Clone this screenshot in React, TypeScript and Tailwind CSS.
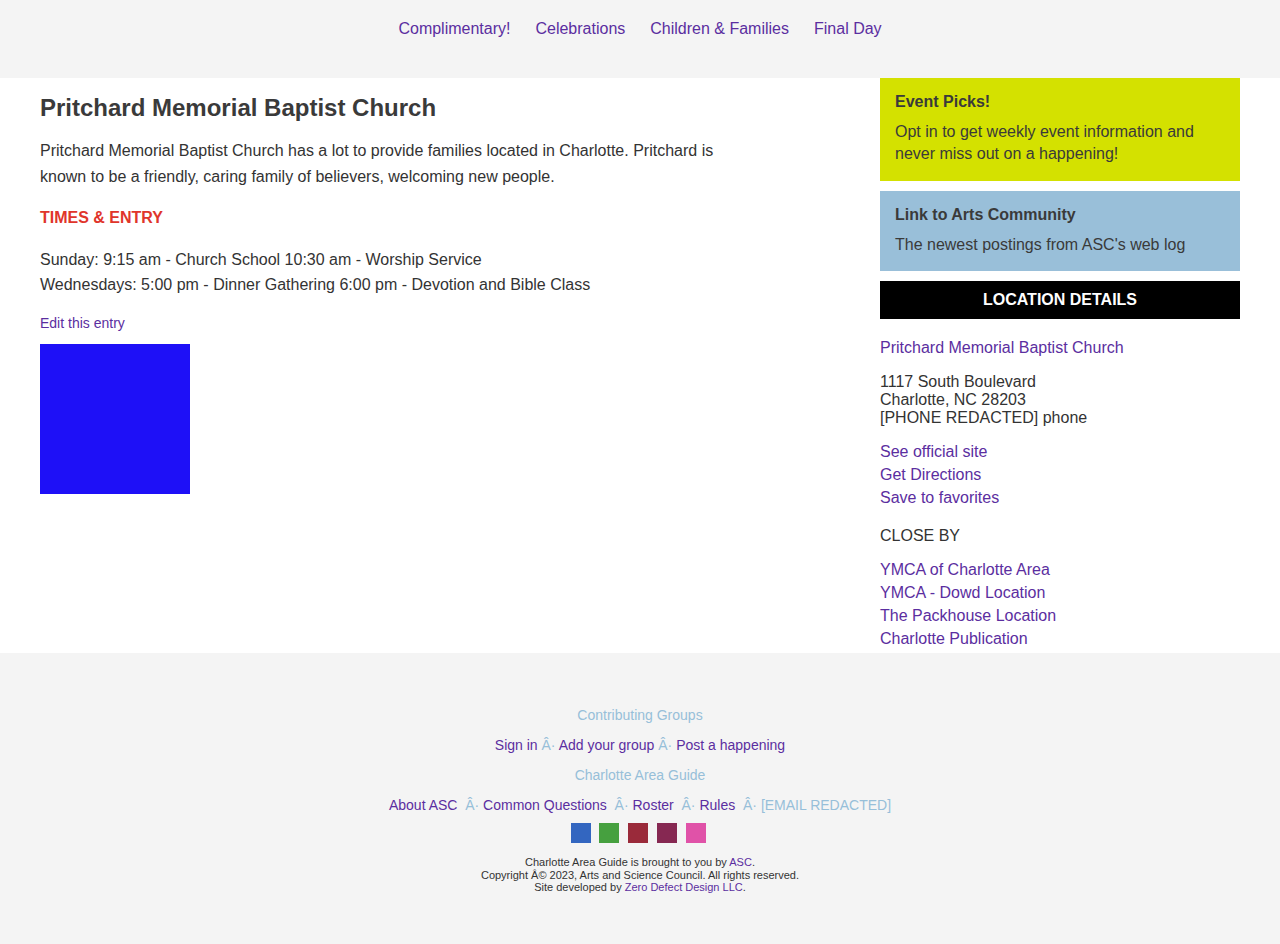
import React from "react";

const P = "text-[#5b2ea0]";
const LB = "text-[#97bfd9]";

export default function App() {
  return (
    <div className="min-h-[944px] bg-white text-[#333333] [font-family:'Liberation_Sans',Arial,sans-serif]">
      <header className="h-[78px] bg-[#f4f4f4] flex justify-center pt-[18px]">
        <nav className="flex gap-[25px] text-[16px] leading-[22px]">
          {["Complimentary!", "Celebrations", "Children & Families", "Final Day"].map((t) => (
            <a key={t} className={P} href="#">{t}</a>
          ))}
        </nav>
      </header>

      <main className="flex justify-between px-[40px] w-[1280px]">
        <section className="w-[720px] pt-[16px]">
          <h1 className="text-[24px] leading-[28px] font-bold text-[#3a3a3a]">Pritchard Memorial Baptist Church</h1>
          <p className="mt-[16px] text-[16px] leading-[26px]">
            Pritchard Memorial Baptist Church has a lot to provide families located in Charlotte. Pritchard is known to be a friendly, caring family of believers, welcoming new people.
          </p>
          <h2 className="mt-[15px] text-[16px] leading-[26px] font-bold text-[#e0352b]">TIMES &amp; ENTRY</h2>
          <p className="mt-[16px] text-[16px] leading-[25px]">
            Sunday: 9:15 am - Church School 10:30 am - Worship Service
            <br />
            Wednesdays: 5:00 pm - Dinner Gathering 6:00 pm - Devotion and Bible Class
          </p>
          <a href="#" className={`block mt-[16px] text-[14px] leading-[20px] ${P}`}>Edit this entry</a>
          <div className="mt-[11px] w-[150px] h-[150px] bg-[#1e10f7]" />
        </section>

        <aside className="w-[360px] pb-[3px]">
          <div className="bg-[#d4e100] px-[15px] pt-[13px] pb-[16px]">
            <h3 className="text-[16px] leading-[22px] font-bold text-[#3a3a3a]">Event Picks!</h3>
            <p className="mt-[8px] text-[16px] leading-[22px] text-[#3a3a3a]">
              Opt in to get weekly event information and never miss out on a happening!
            </p>
          </div>
          <div className="mt-[10px] bg-[#99bfd9] px-[15px] pt-[13px] pb-[15px]">
            <h3 className="text-[16px] leading-[22px] font-bold text-[#3a3a3a]">Link to Arts Community</h3>
            <p className="mt-[8px] text-[16px] leading-[22px] text-[#3a3a3a]">The newest postings from ASC's web log</p>
          </div>
          <div className="mt-[10px] h-[38px] bg-black text-white font-bold text-[16px] flex items-center justify-center">
            LOCATION DETAILS
          </div>
          <a href="#" className={`block mt-[18px] text-[16px] leading-[22px] ${P}`}>Pritchard Memorial Baptist Church</a>
          <p className="mt-[14px] text-[16px] leading-[18px]">
            1117 South Boulevard
            <br />
            Charlotte, NC 28203
            <br />
            [PHONE REDACTED] phone
          </p>
          <div className="mt-[13px] flex flex-col text-[16px] leading-[23px]">
            <a href="#" className={P}>See official site</a>
            <a href="#" className={P}>Get Directions</a>
            <a href="#" className={P}>Save to favorites</a>
          </div>
          <p className="mt-[15px] text-[16px] leading-[23px]">CLOSE BY</p>
          <div className="mt-[11px] flex flex-col text-[16px] leading-[23px]">
            <a href="#" className={P}>YMCA of Charlotte Area</a>
            <a href="#" className={P}>YMCA - Dowd Location</a>
            <a href="#" className={P}>The Packhouse Location</a>
            <a href="#" className={P}>Charlotte Publication</a>
          </div>
        </aside>
      </main>

      <footer className="bg-[#f4f4f4] h-[291px] pt-[52px] flex flex-col items-center text-[14px] leading-[20px]">
        <a href="#" className={LB}>Contributing Groups</a>
        <div className="mt-[10px]">
          <a href="#" className={P}>Sign in</a>
          <span className={LB}> Â· </span>
          <a href="#" className={P}>Add your group</a>
          <span className={LB}> Â· </span>
          <a href="#" className={P}>Post a happening</a>
        </div>
        <a href="#" className={`mt-[10px] ${LB}`}>Charlotte Area Guide</a>
        <div className="mt-[10px] whitespace-pre">
          <a href="#" className={P}>About ASC</a>
          <span className={LB}>{"  Â· "}</span>
          <a href="#" className={P}>Common Questions</a>
          <span className={LB}>{"  Â· "}</span>
          <a href="#" className={P}>Roster</a>
          <span className={LB}>{"  Â· "}</span>
          <a href="#" className={P}>Rules</a>
          <span className={LB}>{"  Â· "}</span>
          <a href="#" className={LB}>[EMAIL REDACTED]</a>
        </div>
        <div className="mt-[8px] flex gap-[8.75px] -translate-x-[2px]">
          <span className="w-[20px] h-[20px] bg-[#3366c0]" />
          <span className="w-[20px] h-[20px] bg-[#46a03f]" />
          <span className="w-[20px] h-[20px] bg-[#9a2a3a]" />
          <span className="w-[20px] h-[20px] bg-[#862852]" />
          <span className="w-[20px] h-[20px] bg-[#e052a8]" />
        </div>
        <div className="mt-[13px] text-[11px] leading-[12.5px] text-center text-[#333333]">
          <p>Charlotte Area Guide is brought to you by <a href="#" className={P}>ASC</a>.</p>
          <p>Copyright Â© 2023, Arts and Science Council. All rights reserved.</p>
          <p>Site developed by <a href="#" className={P}>Zero Defect Design LLC</a>.</p>
        </div>
      </footer>
    </div>
  );
}
